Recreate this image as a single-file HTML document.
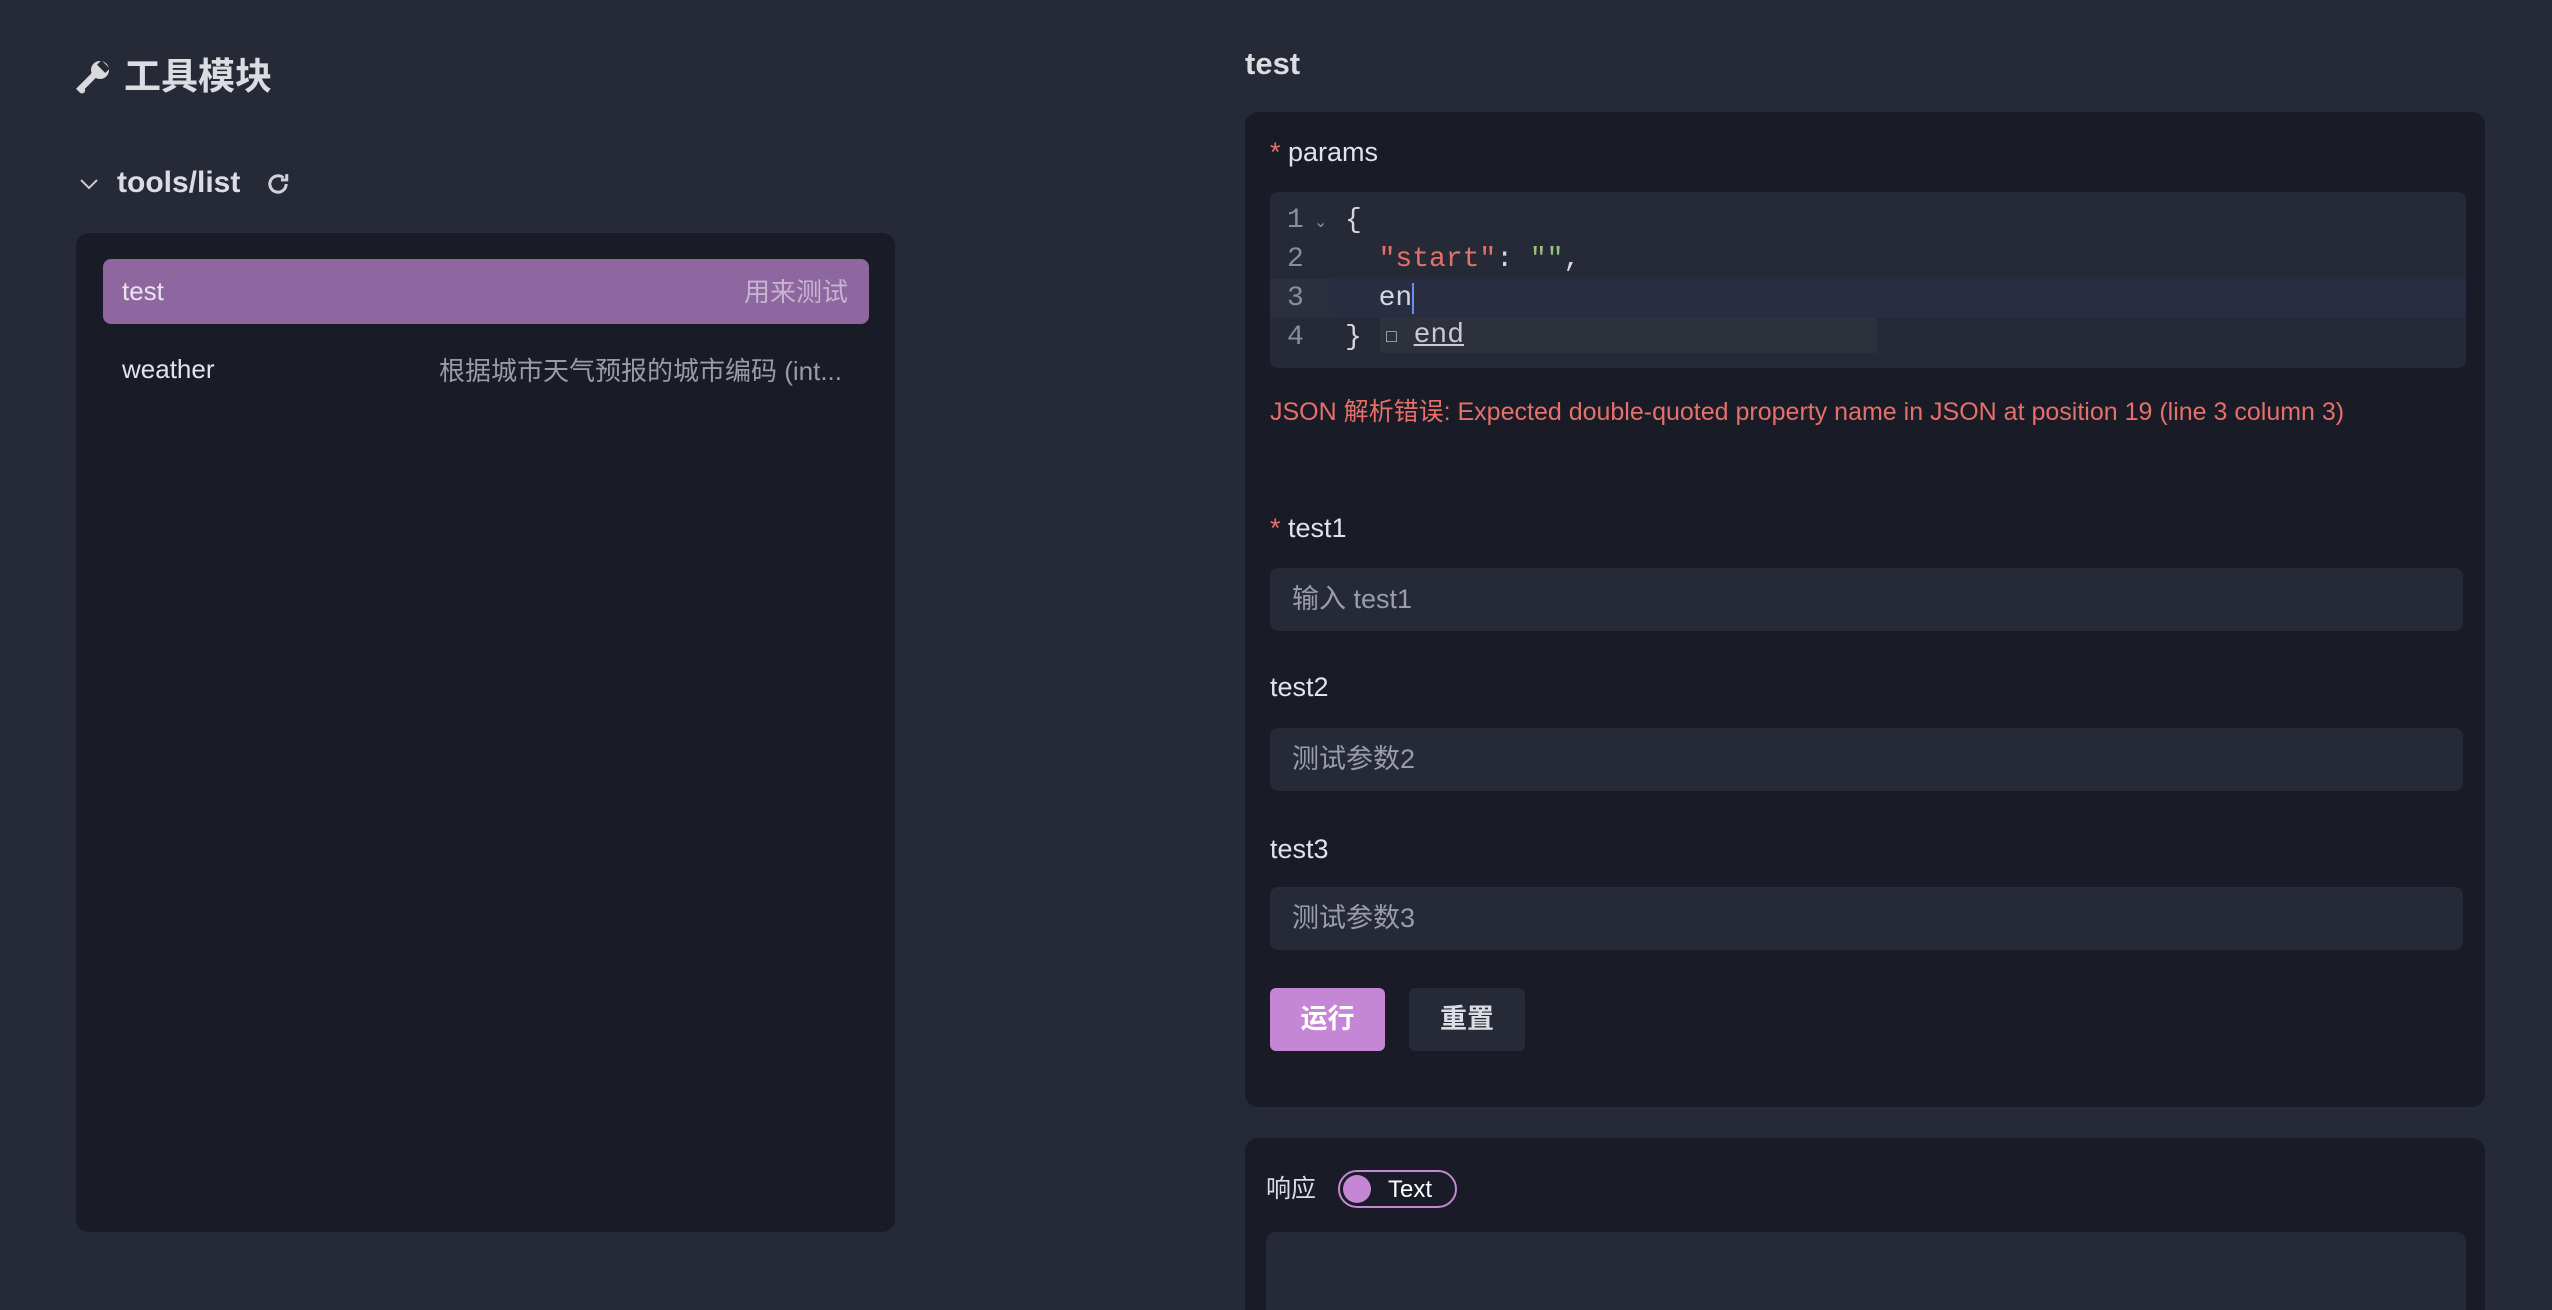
<!DOCTYPE html>
<html style="overflow:hidden;width:2552px;height:1310px"><head><meta charset="utf-8"><style>
*{margin:0;padding:0;box-sizing:border-box}
body{width:2552px;height:1310px;background:#262936;overflow:hidden;position:relative;font-family:"Liberation Sans","Noto Sans CJK SC",sans-serif;color:#e2e3e8}
.a{position:absolute;white-space:nowrap}
.panel{background:#191b26;border-radius:13px}
.inp{background:#262a37;border-radius:8px;position:absolute;left:1270px;width:1193px;height:63px;color:#9a9da8;font-size:27px;line-height:63px;padding-left:22px}
.lbl{font-size:27px;color:#e2e3e8;left:1270px}
.star{color:#e5706a}
.mono{font-family:"Liberation Mono","DejaVu Sans Mono",monospace;font-size:28px}
</style></head><body>
<svg class="a" style="left:76px;top:57px" width="36" height="38" viewBox="0 0 24 24"><path d="M4 21.5L3 20.5 12.5 11" stroke="#d9d9de" stroke-width="4.2" stroke-linecap="round" fill="none"/><circle cx="16" cy="8" r="6" fill="#d9d9de"/><path d="M17 1.5l5.5 5.5-3 3-5.5-5.5z" fill="#262936"/></svg>
<div class="a" style="left:124px;top:46px;font-size:37px;font-weight:bold;color:#dcdde2">工具模块</div>
<svg class="a" style="left:78px;top:176px" width="22" height="16" viewBox="0 0 22 16"><path d="M3 4l8 8 8-8" stroke="#c9cad0" stroke-width="2" fill="none"/></svg>
<div class="a" style="left:117px;top:166px;font-size:30px;font-weight:bold;color:#dcdde2">tools/list</div>
<svg class="a" style="left:264px;top:170px" width="28" height="28" viewBox="0 0 24 24"><path d="M19 12a7 7 0 1 1-2.4-5.3" stroke="#d0d1d6" stroke-width="2.6" fill="none"/><path d="M19.5 3.5v5h-5" stroke="#d0d1d6" stroke-width="2.6" fill="none"/></svg>
<div class="a panel" style="left:76px;top:233px;width:819px;height:999px"></div>
<div class="a" style="left:103px;top:259px;width:766px;height:65px;background:#8e67a0;border-radius:8px"></div>
<div class="a" style="left:122px;top:276px;font-size:26px;color:#e8e4ec">test</div>
<div class="a" style="right:1704px;top:272px;font-size:26px;color:#c6b3cf">用来测试</div>
<div class="a" style="left:122px;top:354px;font-size:26px;color:#e2e3e8">weather</div>
<div class="a" style="right:1710px;top:351px;font-size:26px;color:#9a9ca5">根据城市天气预报的城市编码 (int...</div>

<div class="a" style="left:1245px;top:46px;font-size:31px;font-weight:bold;color:#dcdde2">test</div>
<div class="a panel" style="left:1245px;top:112px;width:1240px;height:995px"></div>
<div class="a lbl" style="top:137px"><span class="star">*</span> params</div>
<div class="a" style="left:1270px;top:192px;width:1196px;height:176px;background:#262a37;border-radius:8px;overflow:hidden">
 <div class="a" style="left:0;top:87px;width:1196px;height:39px;background:#282d42"></div>
 <div class="a" style="left:0;top:87px;width:60px;height:39px;background:#2c303c"></div>
 <div class="a mono" style="left:17px;top:9px;line-height:39px;color:#8a8e9a">1<br>2<br>3<br>4</div>
 <div class="a" style="left:44px;top:20px;font-size:16px;color:#8a8e9a">⌄</div>
 <div class="a mono" style="left:75px;top:9px;line-height:39px;color:#d6d7dc;white-space:pre">{
  <span style="color:#e5706a">"start"</span>: <span style="color:#98c379">""</span>,
  en<span style="border-left:2px solid #6d8cf0;"></span>
}</div>
 <div class="a" style="left:110px;top:126px;width:497px;height:35px;background:#2d313b"></div>
 <div class="a mono" style="left:116px;top:127px;line-height:33px;color:#c9cad0"><span style="font-size:18px">□</span> <span style="text-decoration:underline">end</span></div>
</div>
<div class="a" style="left:1270px;top:392px;font-size:25px;color:#e5706a">JSON 解析错误: Expected double-quoted property name in JSON at position 19 (line 3 column 3)</div>

<div class="a lbl" style="top:513px"><span class="star">*</span> test1</div>
<div class="inp" style="top:568px">输入 test1</div>
<div class="a lbl" style="top:672px">test2</div>
<div class="inp" style="top:728px">测试参数2</div>
<div class="a lbl" style="top:834px">test3</div>
<div class="inp" style="top:887px">测试参数3</div>
<div class="a" style="left:1270px;top:988px;width:115px;height:63px;background:#c586d6;border-radius:6px;color:#fff;font-weight:bold;font-size:27px;line-height:63px;text-align:center">运行</div>
<div class="a" style="left:1409px;top:988px;width:116px;height:63px;background:#262a37;border-radius:6px;color:#dcdde2;font-weight:bold;font-size:27px;line-height:63px;text-align:center">重置</div>

<div class="a" style="left:1245px;top:1138px;width:1240px;height:172px;background:#191b26;border-radius:13px 13px 0 0"></div>
<div class="a" style="left:1266px;top:1169px;font-size:25px;color:#dcdde2">响应</div>
<div class="a" style="left:1338px;top:1170px;width:119px;height:38px;border:2px solid #c586d6;border-radius:19px;background:#191b26">
 <div class="a" style="left:3px;top:3px;width:28px;height:28px;border-radius:50%;background:#c586d6"></div>
 <div class="a" style="left:48px;top:4px;font-size:24px;color:#fff">Text</div>
</div>
<div class="a" style="left:1266px;top:1232px;width:1200px;height:78px;background:#262a37;border-radius:10px 10px 0 0"></div>
</body></html>
